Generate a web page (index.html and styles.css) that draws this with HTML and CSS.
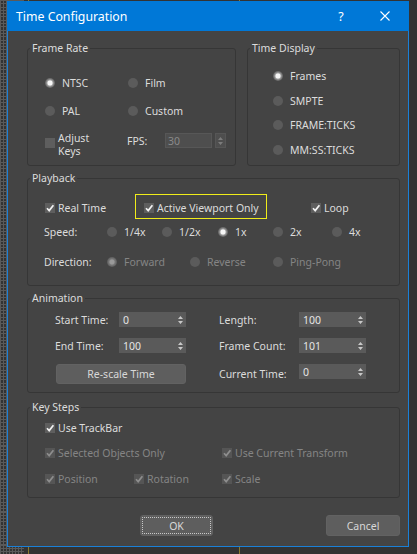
FILE: index.html
```html
<!DOCTYPE html>
<html>
<head>
<meta charset="utf-8">
<title>Time Configuration</title>
<link rel="stylesheet" href="styles.css">
</head>
<body>
<div class="dialog">
  <div class="titlebar">
    <span class="title">Time Configuration</span>
    <span class="tb-btn help">?</span>
    <span class="tb-btn close"><svg width="10" height="10" viewBox="0 0 10 10"><path d="M0.5 0.5L9.5 9.5M9.5 0.5L0.5 9.5" stroke="#fff" stroke-width="1.1" fill="none"/></svg></span>
  </div>
  <div class="content">
    <div class="toprow">
      <section class="group fr">
        <span class="legend">Frame Rate</span>
        <div class="fr-grid">
          <label class="opt"><span class="radio on"></span>NTSC</label>
          <label class="opt"><span class="radio"></span>Film</label>
          <label class="opt"><span class="radio"></span>PAL</label>
          <label class="opt"><span class="radio"></span>Custom</label>
          <label class="opt cbx adjust"><span class="check"></span><span class="two">Adjust<br>Keys</span></label>
          <div class="fps">
            <span class="fps-label">FPS:</span>
            <span class="spin dis">30</span>
            <span class="spinbtn"><svg width="5" height="8" viewBox="0 0 5 8"><path d="M2.5 0L5 3H0z M0 5h5L2.5 8z" fill="#7c7c7c"/></svg></span>
          </div>
        </div>
      </section>
      <section class="group td">
        <span class="legend">Time Display</span>
        <div class="td-list">
          <label class="opt"><span class="radio on"></span>Frames</label>
          <label class="opt"><span class="radio"></span>SMPTE</label>
          <label class="opt"><span class="radio"></span>FRAME:TICKS</label>
          <label class="opt"><span class="radio"></span>MM:SS:TICKS</label>
        </div>
      </section>
    </div>

    <section class="group pb">
      <span class="legend">Playback</span>
      <div class="pb-inner">
        <div class="pb-row1">
          <label class="opt cbx"><span class="check on"><svg width="10" height="10" viewBox="0 0 10 10"><path d="M2 5.2L4.2 7.6L8.4 2.2" stroke="#f2f2f2" stroke-width="1.7" fill="none"/></svg></span>Real Time</label>
          <label class="opt cbx hl"><span class="check on"><svg width="10" height="10" viewBox="0 0 10 10"><path d="M2 5.2L4.2 7.6L8.4 2.2" stroke="#f2f2f2" stroke-width="1.7" fill="none"/></svg></span>Active Viewport Only</label>
          <label class="opt cbx"><span class="check on"><svg width="10" height="10" viewBox="0 0 10 10"><path d="M2 5.2L4.2 7.6L8.4 2.2" stroke="#f2f2f2" stroke-width="1.7" fill="none"/></svg></span>Loop</label>
        </div>
        <div class="pb-row speed">
          <span class="rowlabel">Speed:</span>
          <label class="opt"><span class="radio"></span>1/4x</label>
          <label class="opt"><span class="radio"></span>1/2x</label>
          <label class="opt"><span class="radio on"></span>1x</label>
          <label class="opt"><span class="radio"></span>2x</label>
          <label class="opt"><span class="radio"></span>4x</label>
        </div>
        <div class="pb-row direction">
          <span class="rowlabel">Direction:</span>
          <label class="opt dis"><span class="radio on dis"></span>Forward</label>
          <label class="opt dis"><span class="radio dis"></span>Reverse</label>
          <label class="opt dis"><span class="radio dis"></span>Ping-Pong</label>
        </div>
      </div>
    </section>

    <section class="group an">
      <span class="legend">Animation</span>
      <div class="an-grid">
        <span class="lbl">Start Time:</span>
        <span class="spin">0<svg width="5" height="8" viewBox="0 0 5 8"><path d="M2.5 0L5 3H0z M0 5h5L2.5 8z" fill="#c8c8c8"/></svg></span>
        <span></span>
        <span class="lbl">Length:</span>
        <span class="spin">100<svg width="5" height="8" viewBox="0 0 5 8"><path d="M2.5 0L5 3H0z M0 5h5L2.5 8z" fill="#c8c8c8"/></svg></span>

        <span class="lbl">End Time:</span>
        <span class="spin">100<svg width="5" height="8" viewBox="0 0 5 8"><path d="M2.5 0L5 3H0z M0 5h5L2.5 8z" fill="#c8c8c8"/></svg></span>
        <span></span>
        <span class="lbl">Frame Count:</span>
        <span class="spin">101<svg width="5" height="8" viewBox="0 0 5 8"><path d="M2.5 0L5 3H0z M0 5h5L2.5 8z" fill="#c8c8c8"/></svg></span>

        <button class="btn rescale" type="button">Re-scale Time</button>
        <span></span>
        <span class="lbl">Current Time:</span>
        <span class="spin top">0<svg width="5" height="8" viewBox="0 0 5 8"><path d="M2.5 0L5 3H0z M0 5h5L2.5 8z" fill="#c8c8c8"/></svg></span>
      </div>
    </section>

    <section class="group ks">
      <span class="legend">Key Steps</span>
      <div class="ks-inner">
        <div class="ks-row">
          <label class="opt cbx wide"><span class="check on"><svg width="10" height="10" viewBox="0 0 10 10"><path d="M2 5.2L4.2 7.6L8.4 2.2" stroke="#f2f2f2" stroke-width="1.7" fill="none"/></svg></span>Use TrackBar</label>
        </div>
        <div class="ks-row r2">
          <label class="opt cbx dis wide"><span class="check on dis"><svg width="10" height="10" viewBox="0 0 10 10"><path d="M2 5.2L4.2 7.6L8.4 2.2" stroke="#8e8e8e" stroke-width="1.7" fill="none"/></svg></span>Selected Objects Only</label>
          <label class="opt cbx dis"><span class="check on dis"><svg width="10" height="10" viewBox="0 0 10 10"><path d="M2 5.2L4.2 7.6L8.4 2.2" stroke="#8e8e8e" stroke-width="1.7" fill="none"/></svg></span>Use Current Transform</label>
        </div>
        <div class="ks-row r3">
          <label class="opt cbx dis"><span class="check on dis"><svg width="10" height="10" viewBox="0 0 10 10"><path d="M2 5.2L4.2 7.6L8.4 2.2" stroke="#8e8e8e" stroke-width="1.7" fill="none"/></svg></span>Position</label>
          <label class="opt cbx dis"><span class="check on dis"><svg width="10" height="10" viewBox="0 0 10 10"><path d="M2 5.2L4.2 7.6L8.4 2.2" stroke="#8e8e8e" stroke-width="1.7" fill="none"/></svg></span>Rotation</label>
          <label class="opt cbx dis"><span class="check on dis"><svg width="10" height="10" viewBox="0 0 10 10"><path d="M2 5.2L4.2 7.6L8.4 2.2" stroke="#8e8e8e" stroke-width="1.7" fill="none"/></svg></span>Scale</label>
        </div>
      </div>
    </section>

    <div class="buttons">
      <button class="btn ok" type="button">OK</button>
      <button class="btn cancel" type="button">Cancel</button>
    </div>
  </div>
</div>
</body>
</html>
```
FILE: styles.css
```css
* { box-sizing: border-box; }
html, body { margin: 0; padding: 0; }
body {
  width: 417px;
  height: 554px;
  overflow: hidden;
  background-color: #333333;
  background-image:
    linear-gradient(90deg, transparent 28px, #8a7a2e 28px, #8a7a2e 29px, transparent 29px),
    linear-gradient(90deg, transparent 239px, #8a7a2e 239px, #8a7a2e 240px, transparent 240px),
    repeating-linear-gradient(180deg, #5a5a5a 0 1px, transparent 1px 3.3px),
    repeating-linear-gradient(90deg, #5a5a5a 0 1px, transparent 1px 3px);
  background-size: 100% 100%, 100% 100%, 24px 100%, 24px 100%;
  background-repeat: no-repeat;
  font-family: "Noto Sans", "Open Sans", sans-serif;
  font-size: 10.5px;
  color: #dcdcdc;
}

.dialog {
  margin: 1px 0 0 7px;
  width: 402px;
  height: 546px;
  background: #444444;
  border: 1px solid #1a80d8;
  border-top: 0;
  display: flex;
  flex-direction: column;
}

.titlebar {
  height: 30px;
  margin: 0 -1px;
  background: #0078d7;
  display: flex;
  align-items: center;
  color: #ffffff;
  padding-left: 9px;
}
.title { flex: 1; font-size: 12.3px; }
.tb-btn { width: 44px; display: flex; justify-content: center; align-items: center; }
.help { font-size: 12.5px; }
.close { margin-right: 2px; }

.content {
  padding: 17px 8px 0 19px;
  display: flex;
  flex-direction: column;
}

.group {
  position: relative;
  border: 1px solid #363636;
  border-radius: 3px;
}
.legend {
  position: absolute;
  top: -8px;
  left: 2px;
  padding: 0 2px;
  line-height: 15px;
  background: #444444;
  color: #dcdcdc;
  white-space: nowrap;
}

.toprow { display: flex; gap: 11px; height: 118px; }
.fr { width: 209px; }
.td { flex: 1; }

.opt {
  display: flex;
  align-items: center;
  gap: 7px;
  white-space: nowrap;
  line-height: 14px;
  height: 14px;
}
.opt.cbx { gap: 3px; }
.opt.dis { color: #858585; }

.radio {
  flex: none;
  width: 10px;
  height: 10px;
  border-radius: 50%;
  background: #5b5b5b;
}
.radio.on {
  background: radial-gradient(circle closest-side, #f6f6f6 0 42%, #b4b4b4 56%, #7c7c7c 78%, #626262 100%);
}
.radio.on.dis {
  background: radial-gradient(circle closest-side, #9a9a9a 0 40%, #7a7a7a 60%, #5b5b5b 100%);
}

.check {
  flex: none;
  width: 10px;
  height: 10px;
  background: #5e5e5e;
  display: block;
}
.check svg { display: block; }
.check.dis { background: #555555; }

.fr-grid {
  display: grid;
  grid-template-columns: 83px 1fr;
  grid-template-rows: 14px 14px 26px;
  row-gap: 14px;
  padding: 27px 0 0 17px;
}
.adjust { height: 26px; align-items: flex-start; }
.adjust .check { margin-top: 6px; }
.two { line-height: 13px; }
.fps {
  display: flex;
  align-items: center;
  height: 15px;
  margin: 1px 0 0 -1px;
}
.fps-label { width: 38px; }
.spin {
  height: 15px;
  display: flex;
  align-items: center;
  justify-content: space-between;
  padding: 0 3px 0 4px;
  background: #5a5a5a;
  color: #e4e4e4;
}
.spin svg { flex: none; }
.spin.dis {
  width: 47px;
  background: #4e4e4e;
  border: 1px solid #575757;
  color: #8a8a8a;
  padding-left: 2px;
}
.spinbtn {
  width: 11px;
  height: 15px;
  margin-left: 3px;
  background: #4e4e4e;
  border: 1px solid #565656;
  display: flex;
  align-items: center;
  justify-content: center;
}

.td-list {
  display: flex;
  flex-direction: column;
  gap: 10.5px;
  padding: 20px 0 0 25px;
}

.pb { height: 108px; margin-top: 12px; }
.pb-inner {
  display: flex;
  flex-direction: column;
  padding: 22px 0 0 16px;
}
.pb-row1 {
  display: grid;
  grid-template-columns: 99px 167px auto;
  height: 14px;
  margin-left: 1px;
}
.hl {
  justify-self: start;
  height: auto;
  border: 1px solid #f0ec1a;
  padding: 6px 7px 3px 8px;
  margin: -7px -8px -4px -9px;
}
.pb-row { display: grid; height: 14px; align-items: center; }
.speed { grid-template-columns: 63px 55px 56px 55px 59px auto; margin-top: 10px; }
.direction { grid-template-columns: 63px 83px 83px auto; margin-top: 16px; }
.rowlabel { line-height: 14px; }

.an { height: 95px; margin-top: 12px; }
.an-grid {
  display: grid;
  grid-template-columns: 64px 67px 33px 80px 67px;
  grid-template-rows: 15px 15px 20px;
  row-gap: 11px;
  align-items: center;
  padding: 13px 0 0 27px;
}
.lbl { white-space: nowrap; }
.spin.top { align-self: start; }

.btn {
  font-family: inherit;
  font-size: 10.5px;
  color: #d8d8d8;
  background: #5e5e5e;
  border: 1px solid #626262;
  border-radius: 3px;
  padding: 0;
  margin: 0;
}
.rescale {
  grid-column: 1 / 3;
  width: 130px;
  height: 20px;
  margin-left: 1px;
}

.ks { height: 91px; margin-top: 14px; }
.ks-inner {
  display: flex;
  flex-direction: column;
  padding: 13px 0 0 17px;
}
.ks-row {
  display: grid;
  grid-template-columns: 89px 88px auto;
  height: 14px;
}
.ks-row .wide { grid-column: 1 / 3; }
.ks-row.r2 { margin-top: 11px; }
.ks-row.r3 { margin-top: 12px; }

.buttons {
  display: flex;
  margin-top: 17px;
  padding-left: 113px;
}
.ok {
  width: 73px;
  height: 21px;
  outline: 1px dotted #c8c8c8;
  outline-offset: -3px;
}
.cancel {
  width: 74px;
  height: 21px;
  margin-left: auto;
}
```
